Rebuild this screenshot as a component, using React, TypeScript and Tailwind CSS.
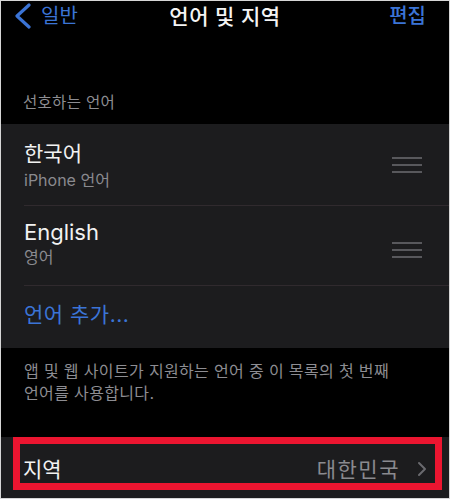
import React from "react";

const font = { fontFamily: '"Inter", "Noto Sans CJK KR", "Noto Sans", sans-serif' };

function Handle() {
  return (
    <div className="flex flex-col gap-[5px] w-[30px] mr-[27px]">
      <div className="h-[2px] bg-[#58585c]" />
      <div className="h-[2px] bg-[#58585c]" />
      <div className="h-[2px] bg-[#58585c]" />
    </div>
  );
}

export default function App() {
  return (
    <div
      className="w-[450px] h-[499px] bg-black border border-[#d6d6d6] overflow-hidden flex flex-col"
      style={font}
    >
      {/* Nav bar */}
      <div className="grid grid-cols-[1fr_auto_1fr] items-center h-[30px] shrink-0">
        <div className="flex items-center pl-[13px] text-[#3b74d6]">
          <svg width="18" height="26" viewBox="0 0 18 26" className="mr-[9px]">
            <path d="M15 2 L3 13 L15 24" fill="none" stroke="#3b74d6" strokeWidth="3.2" strokeLinecap="round" strokeLinejoin="round" />
          </svg>
          <span className="text-[20px] leading-none">일반</span>
        </div>
        <div className="text-[21px] leading-none font-medium text-[#f4f4f4] tracking-[0.5px]">언어 및 지역</div>
        <div className="flex justify-end pr-[23px]">
          <span className="text-[20px] leading-none font-medium text-[#3b74d6]">편집</span>
        </div>
      </div>

      {/* Section header */}
      <div className="mt-[62px] pl-[22px] text-[15.5px] leading-[20px] text-[#8d8d92] tracking-[0.3px] shrink-0">선호하는 언어</div>

      {/* Language group */}
      <div className="mt-[11px] bg-[#1c1c1e] shrink-0">
        <div className="flex items-center h-[81px]">
          <div className="flex-1 pl-[23px] pt-[2px] flex flex-col">
            <span className="text-[21px] leading-[26px] text-[#f2f2f2]">한국어</span>
            <span className="mt-[3px] text-[16px] leading-[20px] text-[#8a8a8f]">iPhone 언어</span>
          </div>
          <Handle />
        </div>
        <div className="ml-[23px] h-[1px] bg-[#302a2e]" />
        <div className="flex items-center h-[79px]">
          <div className="flex-1 pl-[23px] pb-[5px] flex flex-col">
            <span className="text-[22px] leading-[26px] text-[#f2f2f2]">English</span>
            <span className="mt-[2px] text-[16px] leading-[20px] text-[#8a8a8f]">영어</span>
          </div>
          <div className="mt-[8px]">
            <Handle />
          </div>
        </div>
        <div className="ml-[23px] h-[1px] bg-[#302a2e]" />
        <div className="flex items-center h-[62px] pl-[23px] pb-[4px]">
          <span className="text-[21px] leading-[26px] text-[#3b74d6] tracking-[0.5px]">언어 추가...</span>
        </div>
      </div>

      {/* Footer */}
      <div className="pt-[12px] pl-[23px] pr-[40px] h-[89px] text-[16px] leading-[22px] text-[#8d8d92] tracking-[0.35px] break-keep shrink-0">
        앱 및 웹 사이트가 지원하는 언어 중 이 목록의 첫 번째 언어를 사용합니다.
      </div>

      {/* Region group */}
      <div className="flex-1 min-h-0 bg-[#1c1c1e] pl-[12px] pr-[7px]">
        <div className="h-[53px] border-[7px] border-[#ec1530] flex items-center pl-[3px] pr-[8px] pt-[11px]">
          <span className="text-[21px] leading-none text-[#f2f2f2]">지역</span>
          <span className="ml-auto text-[21px] leading-none text-[#8a8a8f] tracking-[1.5px]">대한민국</span>
          <svg width="10" height="16" viewBox="0 0 10 16" className="ml-[17px]">
            <path d="M2 2 L8 8 L2 14" fill="none" stroke="#6a6a6e" strokeWidth="2" strokeLinecap="round" strokeLinejoin="round" />
          </svg>
        </div>
      </div>
    </div>
  );
}
